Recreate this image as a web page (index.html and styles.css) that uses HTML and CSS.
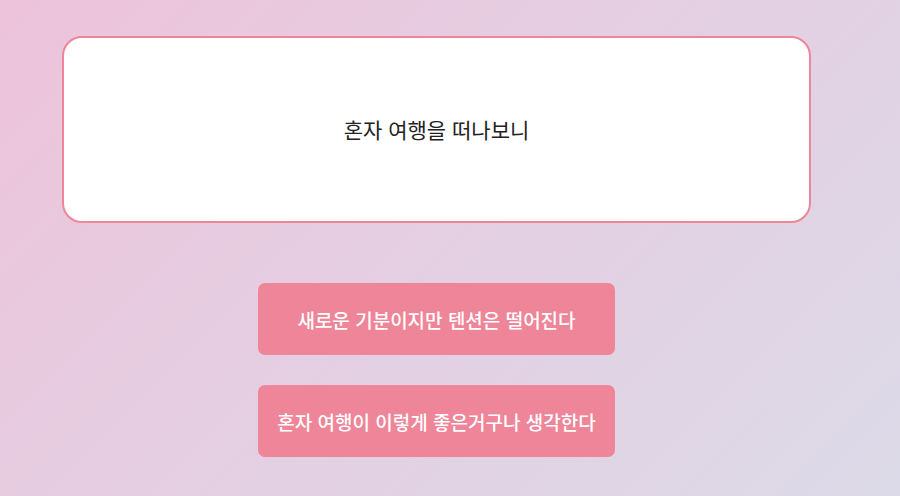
FILE: index.html
```html
<!DOCTYPE html>
<html lang="ko">
<head>
<meta charset="utf-8">
<link rel="stylesheet" href="styles.css">
</head>
<body>
<div class="page">
  <div class="card">
    <p class="question">혼자 여행을 떠나보니</p>
  </div>
  <div class="answers">
    <button class="answer">새로운 기분이지만 텐션은 떨어진다</button>
    <button class="answer">혼자 여행이 이렇게 좋은거구나 생각한다</button>
  </div>
</div>
</body>
</html>
```
FILE: styles.css
```css
html, body {
  margin: 0;
  height: 100%;
}
body {
  background: linear-gradient(135deg, #edc3db 0%, #e4cfe2 50%, #dcdae8 100%);
  font-family: "Noto Sans CJK KR", "Noto Sans", sans-serif;
  overflow: hidden;
}
.page {
  width: 749px;
  padding: 36px 0 0 62px;
  display: flex;
  flex-direction: column;
  align-items: center;
}
.card {
  box-sizing: border-box;
  width: 749px;
  height: 187px;
  background: #fff;
  border: 2px solid #ee8599;
  border-radius: 20px;
  display: flex;
  align-items: center;
  justify-content: center;
}
.question {
  margin: 0 0 2px;
  font-size: 21px;
  color: #222;
}
.answers {
  margin-top: 60px;
  display: flex;
  flex-direction: column;
  gap: 30px;
}
.answer {
  width: 357px;
  height: 72px;
  border: none;
  border-radius: 7px;
  background: #ee8599;
  color: #fff;
  font-family: inherit;
  font-size: 19px;
  font-weight: 500;
  padding: 0;
}
```
